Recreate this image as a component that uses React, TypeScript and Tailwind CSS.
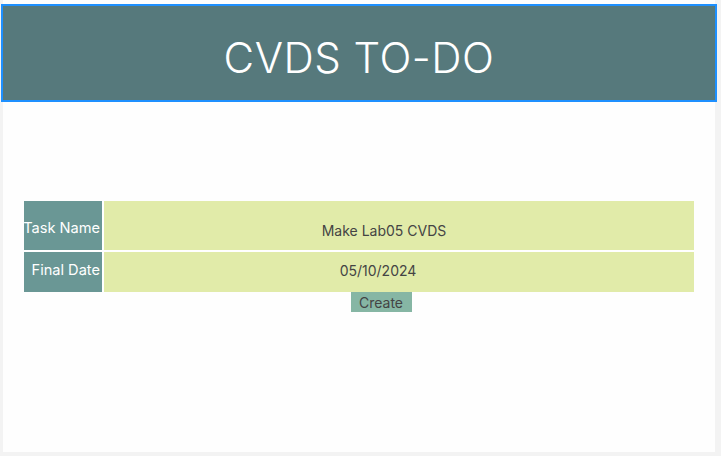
export default function App() {
  return (
    <div className="h-[456px] w-[721px] bg-[#f3f3f3] overflow-hidden" style={{ fontFamily: "Inter, 'Noto Sans', sans-serif" }}>
      <div className="ml-[3px] w-[712px] h-[452px] bg-[#fefefe] pt-[4px]">
        <div className="-ml-[2px] w-[716px] h-[98px] border-2 border-[#1e90ff] bg-[#56797c] flex items-center justify-center pt-[10px]">
          <h1 className="text-[42px] text-white font-light leading-none tracking-[0.5px]">CVDS TO-DO</h1>
        </div>
        <div className="mt-[99px] ml-[21px] w-[670px] flex flex-col">
          <div className="flex h-[49px]">
            <div className="w-[78px] shrink-0 whitespace-nowrap bg-[#6a9795] text-white text-[14.6px] flex items-center justify-end pr-[2px] pt-[6px]">Task Name</div>
            <div className="w-[2px] shrink-0 bg-white" />
            <div className="flex-1 bg-[#e1eba9] text-[#444444] text-[14px] flex items-center justify-center pt-[9px] pr-[30px]">Make Lab05 CVDS</div>
          </div>
          <div className="h-[2px] bg-white" />
          <div className="flex h-[40px]">
            <div className="w-[78px] shrink-0 whitespace-nowrap bg-[#6a9795] text-white text-[14.6px] flex items-center justify-end pr-[2px] pb-[3px]">Final Date</div>
            <div className="w-[2px] shrink-0 bg-white" />
            <div className="flex-1 bg-[#e1eba9] text-[#444444] text-[14px] flex items-center justify-center pb-[4px] pr-[42px]">05/10/2024</div>
          </div>
          <div className="flex justify-center pl-[44px]">
            <button className="w-[61px] h-[20px] bg-[#86b6a4] text-[#444444] text-[14px] leading-none pt-[1px]">Create</button>
          </div>
        </div>
      </div>
    </div>
  );
}
